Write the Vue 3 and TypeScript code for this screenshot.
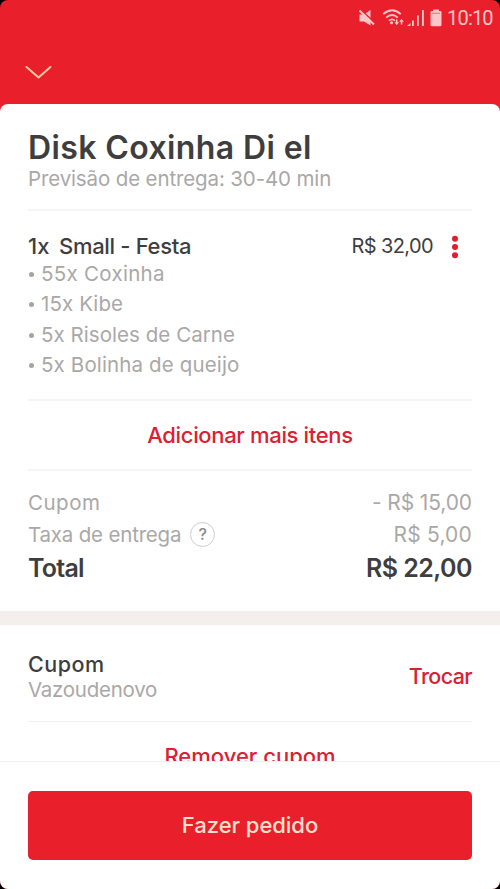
<script setup lang="ts">
interface Part {
  label: string
  spacing: string
}

const parts: Part[] = [
  { label: '55x Coxinha', spacing: '0.29px' },
  { label: '15x Kibe', spacing: '0.1px' },
  { label: '5x Risoles de Carne', spacing: '0.05px' },
  { label: '5x Bolinha de queijo', spacing: '0.14px' },
]
</script>

<template>
  <div class="device">
    <main class="screen">
      <header class="header">
        <div class="status">
          <svg class="mute" width="16" height="18" viewBox="0 0 16 18" fill="#ffc5c8">
            <path d="M.5 5.500h4.500l6.500-4.500v15.500L5 12.500H.5z" />
            <path d="M1.500 .5 16 14" stroke="#ea1f2c" stroke-width="1.600" />
            <path d="M.5 1.500 15 15.500" stroke="#ffc5c8" stroke-width="2" />
          </svg>
          <svg class="wifi" width="24" height="18" viewBox="0 0 24 18" fill="none" stroke="#ffc5c8" stroke-width="1.8">
            <path d="M1.200 5.200Q10 -2.600 18.800 5.200M4.200 8.600Q10 3.400 15.800 8.600M7 11.700Q10 9 13 11.700" />
            <circle cx="9.500" cy="13.800" r="1.500" fill="#ffc5c8" stroke="none" />
            <path d="M14.700 10.500v4M19.500 15.500v-4" stroke-width="1.500" />
            <path d="M12.400 13.200h4.600l-2.300 3zM17.200 12.800h4.600l-2.300-3z" fill="#ffc5c8" stroke="none" />
          </svg>
          <svg class="signal" width="18" height="18" viewBox="0 0 18 18" fill="#ffc5c8">
            <path d="M0 17l3.500-3v3zM5 11.500h1.800V17H5zM10 6.500h1.800V17H10zM15 1h1.800v16H15z" />
          </svg>
          <svg class="battery" width="12" height="18" viewBox="0 0 12 18" fill="#ffc5c8">
            <path d="M3 .500h6v1.500h1.200q1.300 0 1.300 1.300V16q0 1.300-1.300 1.300H1.800Q.5 17.300 .5 16V3.300q0-1.300 1.300-1.300H3z" />
            <path d="M2 4.300h8" stroke="#f26a73" stroke-width="1" />
          </svg>
          <span class="time">10:10</span>
        </div>
        <svg class="chevron" width="28" height="16" viewBox="0 0 28 16" fill="none" stroke="#ffc9a8" stroke-width="2" stroke-linecap="round" stroke-linejoin="round">
          <path d="M2.500 2 14.500 12.500 26.500 2" />
        </svg>
      </header>

      <section class="sheet">
        <div class="scroll">
          <div class="store">
            <h1>Disk Coxinha Di el</h1>
            <p class="muted eta">Previsão de entrega: 30-40 min</p>
          </div>

          <div class="order">
            <div class="item">
              <h2><span class="qty">1x</span><span class="name">Small - Festa</span></h2>
              <ul>
                <li v-for="part in parts" :key="part.label" class="muted">
                  <i class="bullet"></i>
                  <span :style="{ letterSpacing: part.spacing }">{{ part.label }}</span>
                </li>
              </ul>
            </div>
            <span class="price">R$ 32,00</span>
            <svg class="more" width="8" height="24" viewBox="0 0 8 24" fill="#e31c32">
              <circle cx="4" cy="3.700" r="3" />
              <circle cx="4" cy="12" r="3" />
              <circle cx="4" cy="20.300" r="3" />
            </svg>
          </div>

          <button class="link add">Adicionar mais itens</button>

          <div class="totals">
            <div class="line muted">
              <span class="coupon-label">Cupom</span>
              <span class="discount">- R$ 15,00</span>
            </div>
            <div class="line muted">
              <span class="fee-label">Taxa de entrega</span>
              <span class="help">?</span>
              <span class="fee">R$ 5,00</span>
            </div>
            <div class="line total">
              <span>Total</span>
              <span class="sum">R$ 22,00</span>
            </div>
          </div>

          <div class="band"></div>

          <div class="coupon">
            <div>
              <h3>Cupom</h3>
              <p class="muted code">Vazoudenovo</p>
            </div>
            <button class="link swap">Trocar</button>
          </div>

          <button class="link remove">Remover cupom</button>
        </div>

        <footer class="footer">
          <button class="submit">Fazer pedido</button>
        </footer>
      </section>
    </main>
  </div>
</template>

<style>
body {
  margin: 0;
  background: #000;
}
</style>

<style scoped>
.device {
  background: #000;
}

.screen {
  display: flex;
  flex-direction: column;
  width: 500px;
  height: 889px;
  overflow: hidden;
  border-radius: 8px;
  background: #ea1f2c;
  font-family: Inter, sans-serif;
  color: #3e3e3e;
}

h1,
h2,
h3,
p,
ul {
  margin: 0;
  padding: 0;
}

button {
  border: 0;
  padding: 0;
  background: none;
  font-family: inherit;
}

.header {
  flex: none;
  height: 104px;
}

.status {
  display: flex;
  align-items: center;
  justify-content: flex-end;
  height: 36px;
  padding-right: 7px;
}

.wifi {
  margin-left: 7px;
}

.signal {
  margin-left: 1px;
}

.battery {
  margin-left: 5px;
}

.time {
  width: 46px;
  margin-left: 5px;
  font: 400 20px/36px Roboto, sans-serif;
  letter-spacing: -0.8px;
  color: #ffc5c8;
}

.chevron {
  display: block;
  margin: 29px 0 0 24px;
}

.sheet {
  display: flex;
  flex: 1;
  flex-direction: column;
  min-height: 0;
  border-radius: 8px 8px 0 0;
  background: #fff;
}

.scroll {
  flex: 1;
  min-height: 0;
  overflow: hidden;
}

.muted {
  font-size: 20.5px;
  font-weight: 400;
  color: #aaa8a7;
}

.store {
  margin: 0 28px;
  padding: 25px 0 17px;
  border-bottom: 2px solid #f5f5f5;
}

h1 {
  font-size: 32px;
  font-weight: 600;
  line-height: 37px;
  letter-spacing: 0.39px;
}

.eta {
  line-height: 26px;
  letter-spacing: -0.13px;
}

.order {
  display: flex;
  align-items: flex-start;
  margin: 0 28px;
  padding: 24px 0 19px;
  border-bottom: 2px solid #f5f5f5;
}

.item {
  flex: 1;
}

h2 {
  display: flex;
  font-size: 22px;
  font-weight: 500;
  line-height: 23px;
}

.qty {
  width: 31px;
}

.name {
  letter-spacing: -0.31px;
}

ul {
  list-style: none;
}

li {
  display: flex;
  align-items: center;
  height: 30.5px;
}

.bullet {
  width: 5px;
  height: 5px;
  margin: 2px 7px 0 1px;
  border-radius: 50%;
  background: #a6a4a3;
}

.price {
  font-size: 20px;
  line-height: 22px;
  letter-spacing: -0.61px;
}

.more {
  margin: 0 13px 0 18px;
}

.link {
  font-size: 22px;
  font-weight: 500;
  color: #dc2034;
}

.add {
  display: block;
  width: 444px;
  height: 70px;
  margin: 0 28px;
  border-bottom: 2px solid #f5f5f5;
  letter-spacing: -0.34px;
}

.totals {
  height: 125px;
  margin: 0 28px;
  padding-top: 15px;
}

.line {
  display: flex;
  align-items: center;
  height: 32px;
}

.coupon-label {
  letter-spacing: 0.51px;
}

.discount,
.fee,
.sum {
  margin-left: auto;
}

.discount {
  font-size: 21px;
  letter-spacing: -0.11px;
}

.fee-label {
  letter-spacing: -0.19px;
}

.fee {
  font-size: 21px;
  letter-spacing: 0.19px;
}

.help {
  box-sizing: border-box;
  width: 25px;
  height: 25px;
  margin-left: 9px;
  border: 1px solid #cfcdcc;
  border-radius: 50%;
  font-size: 16px;
  font-weight: 500;
  line-height: 23px;
  text-align: center;
  color: #8d8b8a;
}

.total {
  height: 36px;
  font-size: 25px;
  font-weight: 600;
  letter-spacing: -0.77px;
}

.sum {
  letter-spacing: -0.54px;
}

.band {
  height: 14px;
  background: #f4efec;
}

.coupon {
  display: flex;
  align-items: center;
  justify-content: space-between;
  height: 96px;
  margin: 0 28px;
  border-bottom: 1px solid #f0f0f0;
}

h3 {
  margin-top: 8px;
  font-size: 21.5px;
  font-weight: 500;
  line-height: 26px;
  letter-spacing: 0.51px;
}

.code {
  line-height: 26px;
  letter-spacing: -0.27px;
}

.swap {
  margin-top: 6px;
  font-size: 21.5px;
  letter-spacing: -0.6px;
}

.remove {
  display: block;
  width: 444px;
  height: 68px;
  margin: 0 28px;
}

.footer {
  flex: none;
  box-sizing: border-box;
  height: 128px;
  padding: 29px 28px 0;
  border-top: 1px solid #f0f0f0;
}

.submit {
  display: block;
  width: 100%;
  height: 69px;
  padding-bottom: 2px;
  border-radius: 5px;
  background: #ea1f2c;
  font-size: 22px;
  font-weight: 500;
  letter-spacing: -0.04px;
  color: #ffe0cc;
}
</style>
